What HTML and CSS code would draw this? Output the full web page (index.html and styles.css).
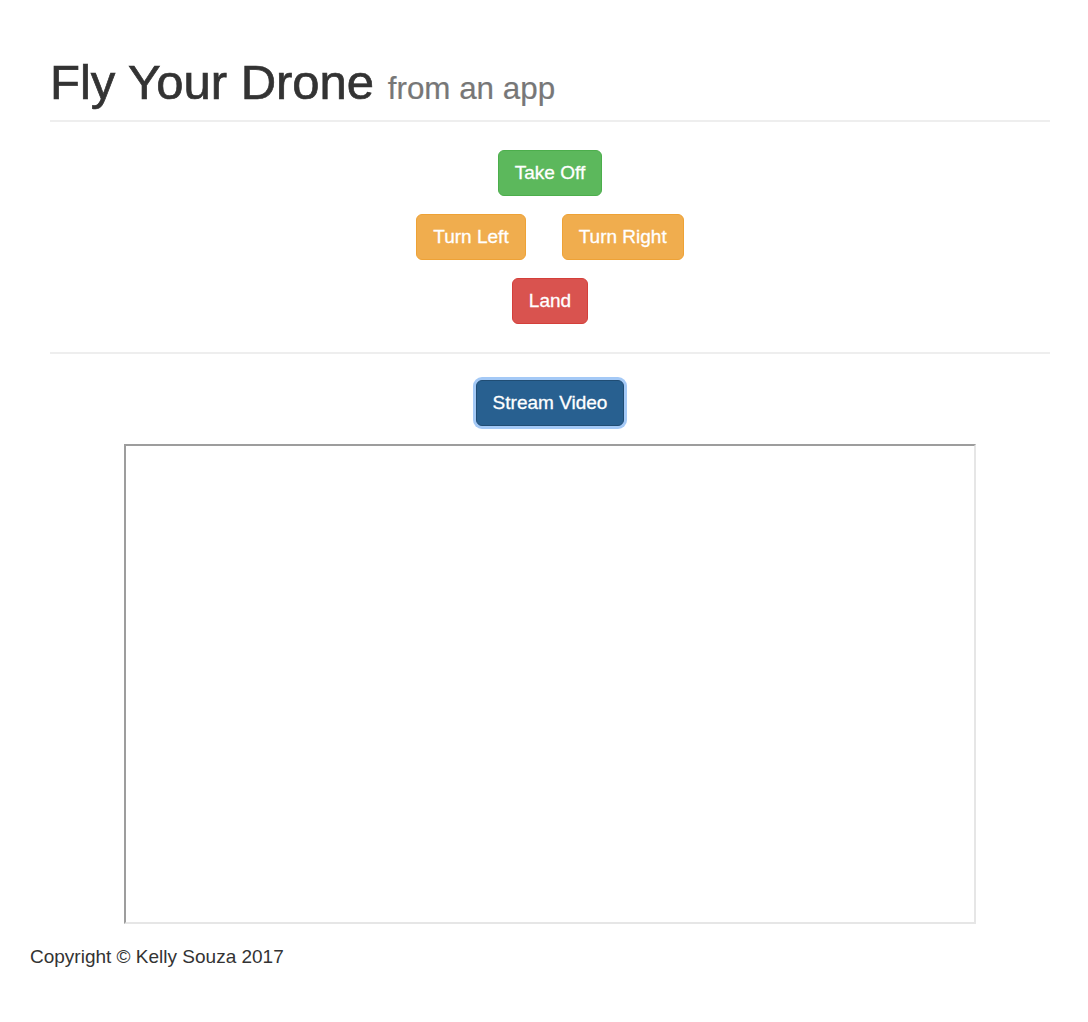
FILE: index.html
```html
<!DOCTYPE html>
<html lang="en">
<head>
<meta charset="utf-8">
<title>Fly Your Drone</title>
<link rel="stylesheet" href="styles.css">
</head>
<body>
<div class="container">
  <div class="page-header">
    <h1>Fly Your Drone <small>from an app</small></h1>
  </div>
  <div class="controls">
    <div class="row"><button class="btn btn-success">Take Off</button></div>
    <div class="row row-turn"><button class="btn btn-warning">Turn Left</button><button class="btn btn-warning">Turn Right</button></div>
    <div class="row"><button class="btn btn-danger">Land</button></div>
  </div>
  <div class="stream">
    <div class="row"><button class="btn btn-primary is-focused">Stream Video</button></div>
    <div class="video-frame"></div>
  </div>
</div>
<footer class="footer">Copyright © Kelly Souza 2017</footer>
</body>
</html>
```
FILE: styles.css
```css
html, body {
  margin: 0;
  padding: 0;
  background: #fff;
}
body {
  font-family: "Liberation Sans", Arial, Helvetica, sans-serif;
  color: #333;
  font-size: 14px;
}
.container {
  width: 1000px;
  margin-left: 50px;
}
.page-header {
  padding-top: 56px;
  padding-bottom: 11px;
  border-bottom: 2px solid #eee;
}
.page-header h1 {
  margin: 0;
  font-size: 49px;
  line-height: 53px;
  font-weight: normal;
  color: #333;
  -webkit-text-stroke: 0.7px #333;
}
.page-header h1 small {
  font-size: 64%;
  line-height: 1;
  color: #777;
  font-weight: normal;
  -webkit-text-stroke: 0.2px #777;
}
.controls {
  display: flex;
  flex-direction: column;
  gap: 18px;
  padding: 28px 0;
  border-bottom: 2px solid #eee;
}
.row {
  display: flex;
  justify-content: center;
}
.row-turn {
  gap: 36px;
}
.btn {
  font-family: inherit;
  font-size: 19px;
  line-height: 24px;
  padding: 10px 16px;
  border: 1px solid transparent;
  border-radius: 6px;
  color: #fff;
  margin: 0;
  cursor: pointer;
  -webkit-text-stroke: 0.3px #fff;
}
.btn-success { background: #5cb85c; border-color: #4cae4c; }
.btn-warning { background: #f0ad4e; border-color: #eea236; }
.btn-danger { background: #d9534f; border-color: #d43f3a; }
.btn-primary { background: #286090; border-color: #204d74; }
.is-focused {
  box-shadow: 0 0 0 3px #a4c9f6;
  outline: none;
}
.stream {
  display: flex;
  flex-direction: column;
  align-items: center;
  gap: 18px;
  padding-top: 26px;
}
.video-frame {
  width: 848px;
  height: 476px;
  border-style: solid;
  border-width: 2px;
  border-color: #9d9d9d #e6e6e6 #e6e6e6 #9d9d9d;
}
.footer {
  margin-top: 20px;
  padding-left: 30px;
  font-size: 19px;
  line-height: 26px;
  color: #333;
}
```
